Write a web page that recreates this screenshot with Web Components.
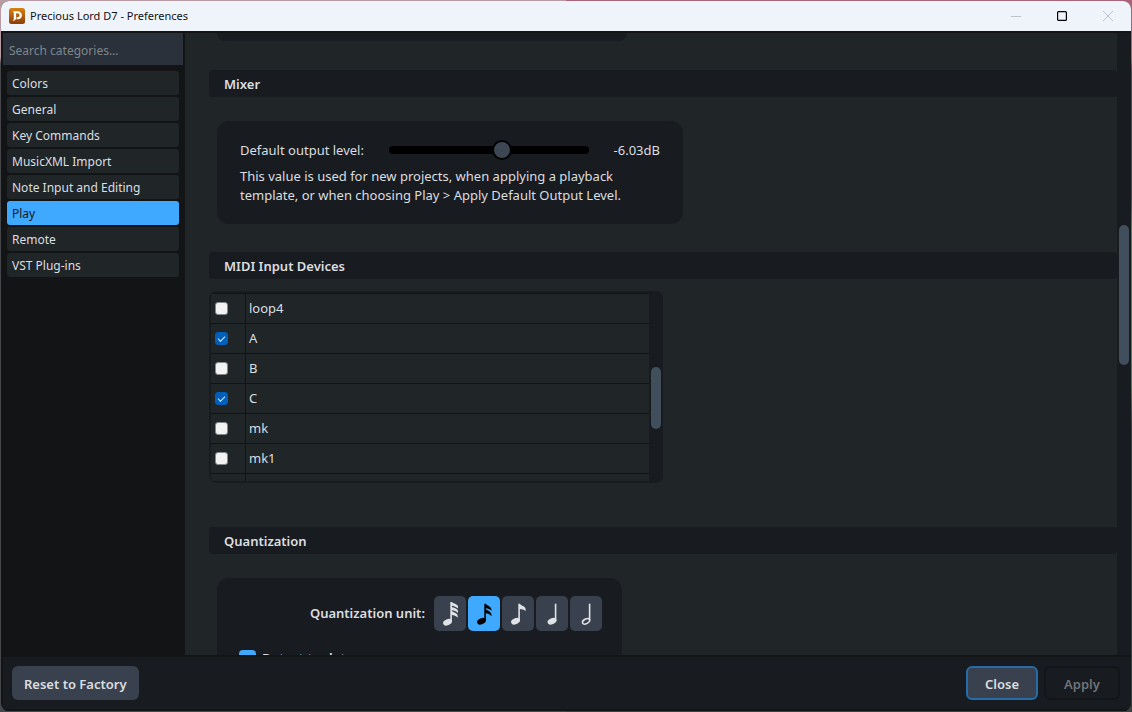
<!DOCTYPE html>
<html lang="en">
<head>
<meta charset="utf-8">
<title>Precious Lord D7 - Preferences</title>
<style>
  html, body {
    height: 100%;
  }

  body {
    margin: 0;
    padding: 1px;
    box-sizing: border-box;
    overflow: hidden;
    background:
      linear-gradient(#b89aa2 0 8%, #45474a 9%) left / 50% 100% no-repeat,
      linear-gradient(#a9647a 0 8%, #55484d 10% 28%, #5c7857 32% 54%, #3b4040 60%);
    --frame: #131416;
    --surface: #202528;
    --panel: #181b1f;
    --control: #38414d;
    --thumb: #414e5b;
    --accent: #3fa9ff;
    --text: #dcdee0;
    color: var(--text);
    font: 13px/19px "Noto Sans", "Open Sans", sans-serif;
  }
</style>
</head>
<body>
<pref-window>
  <pref-titlebar slot="title">Precious Lord D7 - Preferences</pref-titlebar>
  <pref-sidebar slot="sidebar" items="Colors,General,Key Commands,MusicXML Import,Note Input and Editing,Play,Remote,VST Plug-ins" selected="Play"></pref-sidebar>

  <pref-card class="previous"></pref-card>
  <pref-section heading="Mixer">
    <pref-card class="mixer"><output-level value="103" readout="-6.03dB">This value is used for new projects, when applying a playback template, or when choosing Play &gt; Apply Default Output Level.</output-level></pref-card>
  </pref-section>
  <pref-section heading="MIDI Input Devices" class="midi">
    <device-list devices="loop4,A,B,C,mk,mk1," enabled="A,C"></device-list>
  </pref-section>
  <pref-section heading="Quantization">
    <pref-card class="quantize"><quantize-options selected="16th"></quantize-options></pref-card>
  </pref-section>

  <pref-footer slot="footer"></pref-footer>
</pref-window>

<script>
class PrefElement extends HTMLElement {
  connectedCallback() {
    if (this.shadowRoot) return
    const shadowRoot = this.attachShadow({ mode: 'open' })
    shadowRoot.innerHTML = `<style>*, ::before { box-sizing: border-box; }${this.css()}</style>${this.html()}`
  }

  list(name) {
    return (this.getAttribute(name) || '').split(',')
  }
}

class PrefWindow extends PrefElement {
  css() {
    return `
      :host {
        display: flex;
        flex-direction: column;
        height: 100%;
        overflow: hidden;
        border-radius: 8px;
        background: var(--frame);
      }
      .body {
        flex: 1;
        min-height: 0;
        display: grid;
        grid-template-columns: 180px 1fr 14px;
        padding: 2px 0 0 2px;
      }
      main {
        overflow: hidden;
        margin-left: 2px;
        padding-left: 24px;
        background: var(--surface);
      }
    `
  }

  html() {
    return `
      <slot name="title"></slot>
      <div class="body">
        <slot name="sidebar"></slot>
        <main><slot></slot></main>
        <scroll-track rows="192fr 140fr 290fr"></scroll-track>
      </div>
      <slot name="footer"></slot>
    `
  }
}

class ScrollTrack extends PrefElement {
  css() {
    return `
      :host {
        display: grid;
        grid-template-rows: ${this.getAttribute('rows')};
        padding: 0 2px;
        background: var(--panel);
      }
      .thumb {
        grid-row: 2;
        border-radius: 5px;
        background: var(--thumb);
      }
    `
  }

  html() {
    return '<div class="thumb"></div>'
  }
}

class PrefTitlebar extends PrefElement {
  css() {
    return `
      :host {
        display: flex;
        align-items: center;
        height: 30px;
        padding-left: 8px;
        background: #eff4fa;
        color: #101214;
        font: 11px/16px "Noto Sans", "Open Sans", sans-serif;
      }
      .title { flex: 1; margin-left: 5px; }
      button {
        width: 46px;
        height: 30px;
        padding: 0;
        border: 0;
        background: none;
      }
      svg { display: block; margin: auto; }
      .logo { margin: 0; }
      path, rect { fill: none; stroke: #bfc3c7; }
      .max rect { stroke: #000; stroke-width: 1.2; }
      .controls { display: flex; }
    `
  }

  html() {
    return `
      <svg class="logo" width="16" height="16" viewBox="0 0 16 16">
        <defs><linearGradient id="g" x2="0" y2="1"><stop stop-color="#d9820f"/><stop offset="1" stop-color="#8b3d08"/></linearGradient></defs>
        <rect width="16" height="16" rx="2.5" style="fill:url(#g);stroke:none"/>
        <path d="M3.6 3.2H8.4C11.2 3.2 12.9 4.9 12.9 7.3S11.2 11.3 8.7 11.3H7.6V9.3H8.4C9.8 9.3 10.6 8.5 10.6 7.3S9.8 5.3 8.4 5.3H7.1V9.8C7.1 11.8 6 12.8 3.6 12.9C4.5 12.2 4.8 11.5 4.8 10.5V5.3C4.8 4.3 4.4 3.7 3.6 3.2Z" style="fill:#fff;stroke:none"/>
      </svg>
      <span class="title"><slot></slot></span>
      <div class="controls">
        <button aria-label="Minimize" disabled><svg width="10" height="10"><path d="M0 5.5H10"/></svg></button>
        <button class="max" aria-label="Maximize"><svg width="10" height="10"><rect x=".6" y=".6" width="8.8" height="8.8" rx="1"/></svg></button>
        <button aria-label="Close window" disabled><svg width="10" height="10"><path d="M0 0L10 10M10 0L0 10"/></svg></button>
      </div>
    `
  }
}

class PrefSidebar extends PrefElement {
  css() {
    return `
      :host { display: block; font-size: 12px; }
      input {
        display: block;
        width: 100%;
        height: 32px;
        padding: 2px 6px 0;
        border: 0;
        border-radius: 0;
        background: #2a313a;
        color: inherit;
        font: inherit;
      }
      input::placeholder { color: #7f868d; }
      nav {
        display: flex;
        flex-direction: column;
        gap: 2px;
        padding: 6px 4px;
      }
      a {
        height: 24px;
        padding: 2px 5px 0;
        border-radius: 3px;
        background: var(--surface);
        color: inherit;
        line-height: 22px;
        text-decoration: none;
      }
      a[aria-current] { background: var(--accent); color: #14181c; }
    `
  }

  html() {
    const links = this.list('items').map(
      item => `<a href="#"${item === this.getAttribute('selected') ? ' aria-current="page"' : ''}>${item}</a>`
    )
    return `<input type="search" placeholder="Search categories..." aria-label="Search categories"><nav>${links.join('')}</nav>`
  }
}

class PrefSection extends PrefElement {
  css() {
    return `
      :host { display: block; margin-bottom: 28px; }
      :host(.midi) { margin-bottom: 44px; }
      h2 {
        height: 27px;
        margin: 0;
        padding: 2px 15px 0;
        border-radius: 4px;
        background: var(--panel);
        font: 600 13px/25px "Noto Sans", "Open Sans", sans-serif;
      }
    `
  }

  html() {
    return `<h2>${this.getAttribute('heading')}</h2><slot></slot>`
  }
}

class PrefCard extends PrefElement {
  css() {
    return `
      :host {
        display: block;
        box-sizing: border-box;
        margin: 24px 8px 0;
        padding: 18px 23px;
        border-radius: 12px;
        background: var(--panel);
      }
      :host(.previous) {
        max-width: 410px;
        height: 8px;
        margin: 0 8px 29px;
        padding: 0;
        border-radius: 0 0 12px 12px;
      }
      :host(.mixer) { max-width: 466px; padding-bottom: 19px; }
      :host(.quantize) { max-width: 405px; padding-right: 20px; }
    `
  }

  html() {
    return '<slot></slot>'
  }
}

class OutputLevel extends PrefElement {
  css() {
    return `
      .row {
        display: flex;
        align-items: center;
        justify-content: space-between;
        height: 22px;
      }
      :host { display: block; }
      input {
        appearance: none;
        width: 200px;
        height: 20px;
        margin: 0;
        background: none;
      }
      input::-webkit-slider-runnable-track {
        height: 8px;
        border-radius: 4px;
        background: #000;
      }
      input::-webkit-slider-thumb {
        appearance: none;
        box-sizing: border-box;
        width: 20px;
        height: 20px;
        margin-top: -6px;
        border: 2px solid #000;
        border-radius: 50%;
        background: #3c4753;
      }
      p { max-width: 410px; margin: 6px 0 0; }
    `
  }

  html() {
    return `
      <div class="row">
        <label for="level">Default output level:</label>
        <input id="level" type="range" max="180" value="${this.getAttribute('value')}">
        <output for="level">${this.getAttribute('readout')}</output>
      </div>
      <p><slot></slot></p>
    `
  }
}

class DeviceList extends PrefElement {
  css() {
    return `
      :host {
        display: grid;
        grid-template-columns: 1fr 14px;
        box-sizing: border-box;
        max-width: 454px;
        height: 192px;
        margin-top: 12px;
        overflow: hidden;
        border-radius: 8px;
        background: var(--panel);
      }
      .rows {
        overflow: hidden;
        margin: 2px 0 2px 2px;
        border-radius: 4px 0 0 4px;
        background: var(--surface);
      }
      table {
        width: 100%;
        border-collapse: separate;
        border-spacing: 0;
        border-top: 1px solid #111416;
      }
      td { height: 30px; padding: 0 3px; border-bottom: 1px solid #111416; }
      td:first-child { width: 35px; padding-left: 4px; border-right: 1px solid #111416; }
      input {
        appearance: none;
        display: grid;
        place-items: center;
        width: 13px;
        height: 13px;
        margin: 0;
        border: 1px solid #85888a;
        border-radius: 3px;
        background: #f3f3f3;
      }
      input:checked { border-color: #005fb8; background: #005fb8; }
      input:checked::before {
        content: "";
        width: 7px;
        height: 4px;
        margin-bottom: 2px;
        border: solid #dbe8f5;
        border-width: 0 0 1px 1px;
        transform: rotate(-45deg);
      }
    `
  }

  html() {
    const enabled = this.list('enabled')
    const rows = this.list('devices').map((name, i) => `
      <tr>
        <td><input type="checkbox" id="device${i}" aria-label="${name || 'Device'}"${enabled.includes(name) ? ' checked' : ''}></td>
        <td><label for="device${i}">${name}</label></td>
      </tr>`)
    return `
      <div class="rows"><table>${rows.join('')}</table></div>
      <scroll-track rows="76fr 62fr 54fr"></scroll-track>
    `
  }
}

const head = '<ellipse cx="13.5" cy="25.3" rx="4.6" ry="3" transform="rotate(-22 13.5 25.3)"/>'
const notes = {
  '32nd': `<path d="M16.3 6H17.9C18.8 7.4 23 7.6 24 10.2V12.6C22.4 10.8 19.6 10.2 17.9 9.8V10.8C19.2 12 23 12.1 24 14.8V17C22.4 15.3 19.6 14.7 17.9 14.3V15.1C19.2 16.5 24.6 17 23.7 21.8C22.3 19.5 19.6 19.2 17.9 18.9V26H16.3Z"/><ellipse cx="13.5" cy="26.3" rx="4.6" ry="3" transform="rotate(-22 13.5 26.3)"/>`,
  '16th': `<path d="M16.3 7.7H17.9C18.7 9.6 23.8 9.8 23.6 14.9C22.3 13.1 19.7 12.6 17.9 12.2V13.3C19.3 15 24.2 15.2 23.5 20.3C22 18.1 19.8 17.7 17.9 17.3V25H16.3Z"/>${head}`,
  '8th': `<path d="M16.3 7.7H17.9C18.8 10 24.8 9.8 23.6 15C21.8 13.4 19.6 13.2 17.9 13V25H16.3Z"/>${head}`,
  quarter: `<g transform="translate(2.5)"><path d="M16.3 7.7H17.9V25H16.3Z"/>${head}</g>`,
  half: `<g transform="translate(2.5)"><path d="M16.3 7.7H17.9V24H16.3Z"/><ellipse cx="13.6" cy="25.3" rx="3.9" ry="2.3" transform="rotate(-28 13.6 25.3)" fill="none" stroke="currentColor" stroke-width="1.5"/></g>`
}

class QuantizeOptions extends PrefElement {
  css() {
    return `
      :host { display: block; font-weight: 600; }
      .row {
        display: flex;
        align-items: center;
        justify-content: flex-end;
        gap: 9px;
      }
      .units { display: flex; gap: 2px; }
      button {
        width: 32px;
        height: 35px;
        padding: 0;
        border: 0;
        border-radius: 5px;
        background: var(--control);
        color: #dfe2e6;
      }
      button[aria-pressed="true"] { background: var(--accent); color: #000; }
      svg { display: block; fill: currentColor; }
      .check {
        display: flex;
        gap: 6px;
        margin: 19px 0 0 -1px;
        line-height: 17px;
      }
      input {
        appearance: none;
        width: 17px;
        height: 17px;
        margin: 0;
        border-radius: 4px;
        background: var(--accent);
      }
    `
  }

  html() {
    const buttons = Object.keys(notes).map(
      name => `<button aria-label="${name} note" aria-pressed="${name === this.getAttribute('selected')}"><svg width="32" height="35" viewBox="0 0 32 35">${notes[name]}</svg></button>`
    )
    return `
      <div class="row">
        <span id="unit">Quantization unit:</span>
        <div class="units" role="group" aria-labelledby="unit">${buttons.join('')}</div>
      </div>
      <label class="check"><input type="checkbox" checked>Detect tuplets</label>
    `
  }
}

class PrefFooter extends PrefElement {
  css() {
    return `
      :host {
        display: flex;
        gap: 6px;
        padding: 9px 11px 9px 9px;
        margin-left: 2px;
        border: solid var(--frame);
        border-width: 2px 0;
        background: var(--panel);
      }
      button {
        height: 34px;
        min-width: 72px;
        padding: 2px 12px 0;
        border: 0;
        border-radius: 6px;
        background: var(--control);
        color: inherit;
        font: inherit;
        font-weight: 600;
      }
      .reset { margin-right: auto; }
      .close { border: 2px solid #256ca8; }
      .apply {
        min-width: 76px;
        border: 2px solid #131518;
        background: none;
        color: #6f7478;
      }
    `
  }

  html() {
    return `
      <button class="reset">Reset to Factory</button>
      <button class="close">Close</button>
      <button class="apply" disabled>Apply</button>
    `
  }
}

customElements.define('scroll-track', ScrollTrack)
customElements.define('pref-titlebar', PrefTitlebar)
customElements.define('pref-sidebar', PrefSidebar)
customElements.define('pref-card', PrefCard)
customElements.define('output-level', OutputLevel)
customElements.define('device-list', DeviceList)
customElements.define('quantize-options', QuantizeOptions)
customElements.define('pref-section', PrefSection)
customElements.define('pref-footer', PrefFooter)
customElements.define('pref-window', PrefWindow)
</script>
</body>
</html>
